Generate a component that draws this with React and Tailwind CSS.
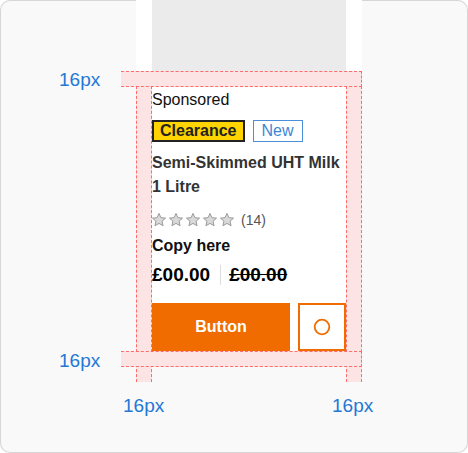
import React from 'react';

const font = { fontFamily: '"Liberation Sans", Arial, sans-serif' };

function Star() {
  return (
    <svg width="16" height="16" viewBox="0 0 24 24" className="shrink-0">
      <path
        d="M12 2.2l2.9 6.3 6.9.7-5.2 4.6 1.5 6.8L12 17.1l-6.1 3.5 1.5-6.8-5.2-4.6 6.9-.7z"
        fill="#d9d9d9"
        stroke="#9a9a9a"
        strokeWidth="1.5"
        strokeLinejoin="round"
      />
    </svg>
  );
}

function ProductCard() {
  return (
    <div className="-mt-px flex w-[226px] flex-col bg-white px-4 pb-4">
      {/* image placeholder */}
      <div className="h-[72px] bg-[#ebebeb]" />

      <div className="mt-[17px] flex flex-col">
        <p className="text-[16px] leading-6 text-[#111]">Sponsored</p>

        <div className="mt-2 flex items-center gap-2">
          <span className="h-[22px] border-2 border-[#222] bg-[#ffd400] px-[6px] text-[16px] font-bold leading-[18px] text-[#222]">
            Clearance
          </span>
          <span className="h-[22px] border border-[#4a8fd8] px-[8px] text-[16px] leading-5 text-[#3d86d6]">
            New
          </span>
        </div>

        <h3 className="mt-[9px] text-[16px] font-bold leading-6 text-[#333]">
          Semi-Skimmed UHT Milk 1 Litre
        </h3>

        <div className="mt-[9px] flex h-6 items-center">
          <div className="-ml-px flex gap-px">
            <Star />
            <Star />
            <Star />
            <Star />
            <Star />
          </div>
          <span className="ml-[6px] text-[14px] text-[#555]">(14)</span>
        </div>

        <p className="mt-[2px] text-[16px] font-bold leading-6 text-[#111]">Copy here</p>

        <div className="mt-[3px] flex h-7 items-center">
          <span className="text-[19px] font-bold leading-7 text-black">£00.00</span>
          <span className="ml-[10px] mr-[8px] h-5 w-px bg-[#dddddd]" />
          <span className="text-[19px] font-bold leading-7 text-black line-through">£00.00</span>
        </div>

        <div className="mt-[14px] flex gap-2">
          <button className="h-12 flex-1 bg-[#f06c00] text-[16px] font-bold text-white">
            Button
          </button>
          <button className="flex h-12 w-12 items-center justify-center border-2 border-[#f06c00] bg-white">
            <svg width="18" height="18" viewBox="0 0 18 18">
              <circle cx="9" cy="9" r="7.3" fill="none" stroke="#f06c00" strokeWidth="1.8" />
            </svg>
          </button>
        </div>
      </div>
    </div>
  );
}

export default function App() {
  return (
    <div
      className="relative h-[453px] w-[468px] overflow-hidden rounded-[10px] bg-[#f9f9f9] pl-[136px] shadow-[inset_0_0_0_1px_#d6d6d6]"
      style={font}
    >
      <ProductCard />

      {/* spacing annotations */}
      <div className="absolute left-[136px] top-[86px] h-[296px] w-4 border-x border-dashed border-[#ff6b6b] bg-[#fce4e4]" />
      <div className="absolute left-[346px] top-[86px] h-[296px] w-4 border-x border-dashed border-[#ff6b6b] bg-[#fce4e4]" />
      <div className="absolute left-[121px] top-[71px] h-4 w-[241px] border-y border-r border-dashed border-[#ff6b6b] bg-[#fce4e4]" />
      <div className="absolute left-[121px] top-[351px] h-4 w-[241px] border-y border-r border-dashed border-[#ff6b6b] bg-[#fce4e4]" />

      <span className="absolute left-[59px] top-[68px] text-[19px] leading-6 text-[#2378d6]">16px</span>
      <span className="absolute left-[59px] top-[349px] text-[19px] leading-6 text-[#2378d6]">16px</span>
      <span className="absolute left-[123px] top-[394px] text-[19px] leading-6 text-[#2378d6]">16px</span>
      <span className="absolute left-[332px] top-[394px] text-[19px] leading-6 text-[#2378d6]">16px</span>
    </div>
  );
}
